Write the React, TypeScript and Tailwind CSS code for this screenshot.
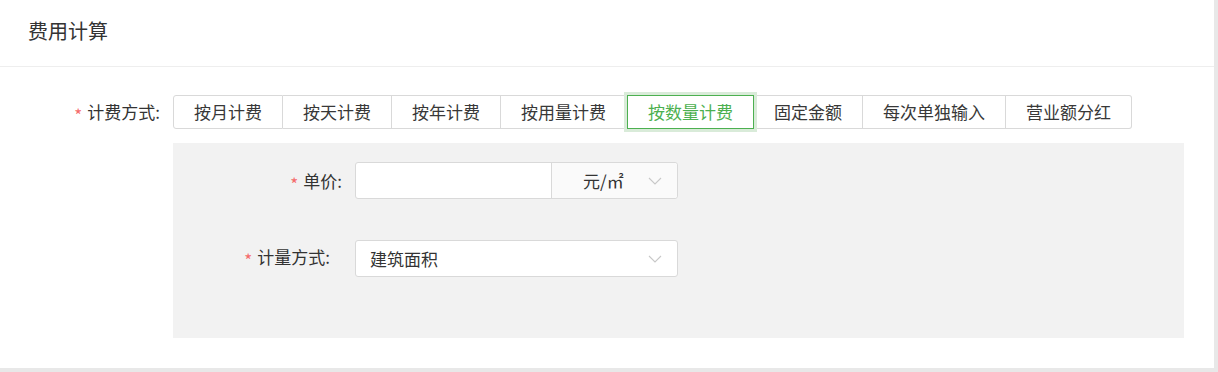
const methods = ['按月计费', '按天计费', '按年计费', '按用量计费', '按数量计费', '固定金额', '每次单独输入', '营业额分红'];
const activeMethod = '按数量计费';

function Label({ text, width, extra = '' }: { text: string; width: string; extra?: string }) {
  return (
    <div className={`${width} ${extra} shrink-0 text-right text-[17px] text-[#333]`}>
      <span className="mr-[5px] inline-block translate-y-[3px] text-[#f56c6c]">*</span>
      {text}:
    </div>
  );
}

function Chevron() {
  return (
    <svg width="14" height="8" viewBox="0 0 14 8" fill="none" className="shrink-0">
      <path d="M1 1l6 6 6-6" stroke="#c8c8c8" strokeWidth="1.1" />
    </svg>
  );
}

export default function App() {
  return (
    <div className="h-[372px] w-[1218px] bg-[#e8e8e8] font-['Noto_Sans_CJK_SC',sans-serif]">
      <div className="h-[368px] w-[1214px] bg-white">
        <div className="flex h-[67px] items-center border-b border-[#eeeeee] pl-[28px] pb-[4px] text-[20px] text-[#333]">
          费用计算
        </div>

        <div className="pt-[28px]">
          <div className="flex items-center">
            <Label text="计费方式" width="w-[160px]" />
            <div className="ml-[13px] flex h-[34px]">
              {methods.map((m, i) => {
                const active = m === activeMethod;
                return (
                  <div
                    key={m}
                    className={`relative flex items-center px-[20px] text-[17px] ${
                      active
                        ? 'z-10 border border-[#4cb050] text-[#4cb050] shadow-[0_0_0_3px_#d9ebd9]'
                        : `border-y border-r border-[#d9d9d9] text-[#383838] ${i === 0 ? 'rounded-l-[3px] border-l' : ''} ${
                            i === methods.length - 1 ? 'rounded-r-[3px]' : ''
                          }`
                    }`}
                  >
                    {m}
                  </div>
                );
              })}
            </div>
          </div>

          <div className="ml-[173px] mt-[14px] h-[195px] w-[1011px] bg-[#f2f2f2] pt-[19px]">
            <div className="flex items-center">
              <Label text="单价" width="w-[169px]" />
              <div className="ml-[13px] flex h-[37px] w-[323px] rounded-[3px] border border-[#d9d9d9] bg-white">
                <div className="w-[196px] border-r border-[#d9d9d9]" />
                <div className="flex flex-1 items-center justify-between rounded-r-[3px] bg-[#fafafa] pl-[31px] pr-[15px] text-[17px] text-[#333]">
                  <span>元/㎡</span>
                  <Chevron />
                </div>
              </div>
            </div>

            <div className="mt-[41px] flex items-center">
              <Label text="计量方式" width="w-[169px]" extra="pr-[12px] pb-[4px]" />
              <div className="ml-[13px] flex h-[37px] w-[323px] items-center justify-between rounded-[3px] border border-[#d9d9d9] bg-white pl-[14px] pr-[15px] text-[17px] text-[#333]">
                <span>建筑面积</span>
                <Chevron />
              </div>
            </div>
          </div>
        </div>
      </div>
    </div>
  );
}
